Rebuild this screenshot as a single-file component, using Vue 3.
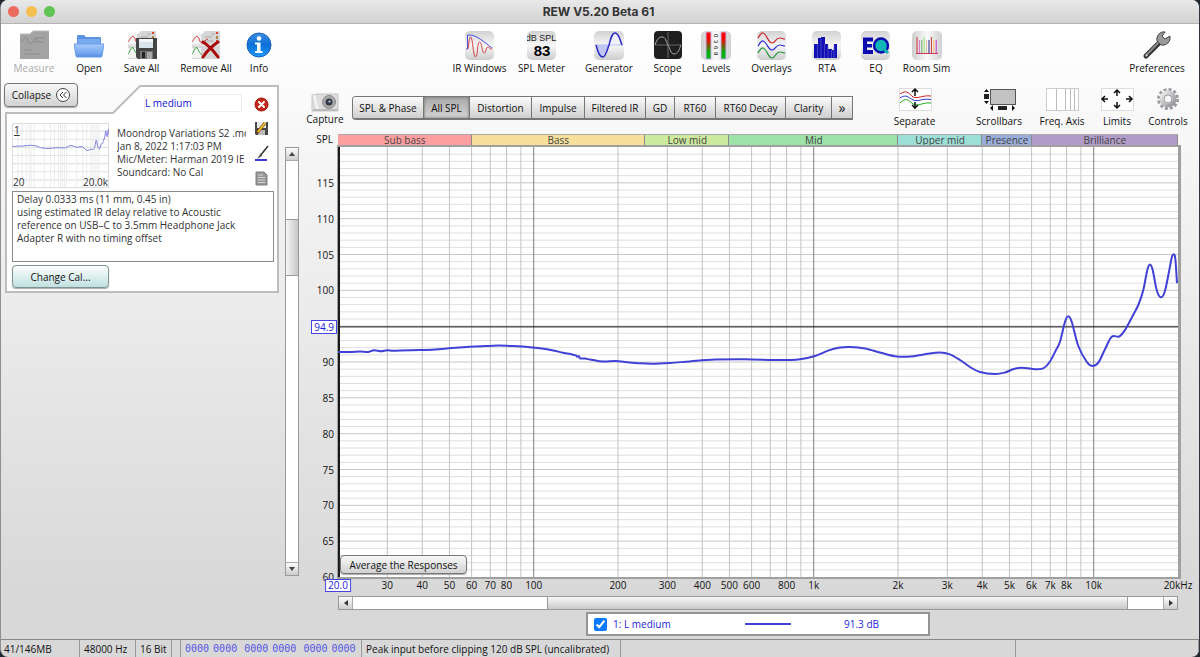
<script setup>
import { ref } from 'vue'

const F_MIN = 20
const F_MAX = 20000
const DB_MIN = 60
const DB_MAX = 120
const W = 840
const H = 430

const fx = (f) => Math.log(f / F_MIN) / Math.log(F_MAX / F_MIN)
const dy = (d) => (DB_MAX - d) / (DB_MAX - DB_MIN)

const vLines = []
for (let decade = 10; decade <= 10000; decade *= 10) {
  for (let n = 1; n < 10; n++) {
    const f = n * decade
    if (f > F_MIN && f < F_MAX) vLines.push({ x: fx(f) * W, major: n === 1 })
  }
}
const hLines = []
for (let d = DB_MIN + 1; d < DB_MAX; d++) hLines.push({ y: dy(d) * H, major: d % 5 === 0 })

const dbLabels = [115, 110, 105, 100, 90, 85, 80, 75, 70, 65, 60]
const cursorDb = 94.9
const freqLabels = [
  [30, '30'], [40, '40'], [50, '50'], [60, '60'], [70, '70'], [80, '80'], [100, '100'],
  [200, '200'], [300, '300'], [400, '400'], [500, '500'], [600, '600'], [800, '800'],
  [1000, '1k'], [2000, '2k'], [3000, '3k'], [4000, '4k'], [5000, '5k'], [6000, '6k'],
  [7000, '7k'], [8000, '8k'], [10000, '10k'], [20000, '20kHz'],
]

const bands = [
  { name: 'Sub bass', from: 20, to: 60, color: '#fe9f9f' },
  { name: 'Bass', from: 60, to: 250, color: '#f7e09c' },
  { name: 'Low mid', from: 250, to: 500, color: '#cdea9c' },
  { name: 'Mid', from: 500, to: 2000, color: '#9de3a9' },
  { name: 'Upper mid', from: 2000, to: 4000, color: '#9cdfd6' },
  { name: 'Presence', from: 4000, to: 6000, color: '#9aaedb' },
  { name: 'Brilliance', from: 6000, to: 20000, color: '#b19cc9' },
]

// Response trace in plot units (840 x 430)
const trace = [
  [0, 205], [12, 205], [22, 204.6], [30, 205], [36, 203.3], [43, 204.3], [49, 203.3], [55, 203.8],
  [62, 203.4], [82, 203], [97, 202.4], [114, 201], [132, 199.8], [147, 199.1], [160, 198.6], [172, 199],
  [187, 199.7], [202, 201.2], [214, 203.2], [225, 205.7], [234, 207.4], [236, 208], [238, 208.4],
  [239, 209.8], [241, 209.2], [242, 211.4], [247, 211.6], [252, 212.6], [259, 213.8], [267, 214.5],
  [278, 214], [287, 215.1], [300, 216.2], [314, 216.8], [332, 216], [352, 214.4], [377, 212.6],
  [407, 212.2], [442, 213.1], [462, 212.2], [477, 209], [490, 203.6], [502, 200.6], [512, 200],
  [527, 201.5], [542, 205.5], [557, 209.3], [572, 209.6], [587, 207.2], [602, 205.6], [612, 207.4],
  [622, 213], [632, 220], [642, 225], [657, 227], [667, 225.5], [675, 222.3], [683, 220.7],
  [692, 221.5], [699, 222.3], [706, 221], [712, 214.5], [718, 203], [722, 194.7], [727, 174.7],
  [730.3, 169.2], [733.7, 174.7], [740.3, 199], [748.7, 214.7], [754.3, 219], [760.3, 215.7],
  [767, 202.3], [773.7, 189.8], [781.3, 189.5], [787, 183], [793.7, 170.7], [800.3, 158],
  [805.3, 143], [809.3, 123], [812, 117.5], [814.7, 123], [818.7, 143], [822.7, 150.3],
  [826.7, 144.7], [830.7, 126.3], [833.7, 110.7], [835.7, 107.3], [837.3, 111.3], [839, 136.3],
]
const tracePath = trace.reduce((d, p, i, a) => {
  if (i === 0) return `M${p[0]},${p[1]}`
  const p0 = a[i - 2] || a[i - 1]
  const p1 = a[i - 1]
  const p3 = a[i + 1] || p
  const c1 = [p1[0] + (p[0] - p0[0]) / 6, p1[1] + (p[1] - p0[1]) / 6]
  const c2 = [p[0] - (p3[0] - p1[0]) / 6, p[1] - (p3[1] - p1[1]) / 6]
  return `${d}C${c1.map((v) => v.toFixed(2))} ${c2.map((v) => v.toFixed(2))} ${p[0]},${p[1]}`
}, '')

const tabs = ['SPL & Phase', 'All SPL', 'Distortion', 'Impulse', 'Filtered IR', 'GD', 'RT60', 'RT60 Decay', 'Clarity', '»']
const activeTab = ref('All SPL')
const name = ref('L medium')
const notes = ref('Delay 0.0333 ms (11 mm, 0.45 in)\nusing estimated IR delay relative to Acoustic\nreference on USB–C to 3.5mm Headphone Jack\nAdapter R with no timing offset')
const shown = ref(true)
const roomBars = ['#c33', '#e070c0', '#6a6', '#9d6', '#cba', '#228', '#c33', '#fb6', '#c3c']
</script>

<template>
  <div class="window">
    <svg class="defs" width="0" height="0" aria-hidden="true">
      <defs>
        <linearGradient id="tile" x1="0" y1="0" x2="0" y2="1">
          <stop offset="0" stop-color="#d2d2d2" />
          <stop offset=".5" stop-color="#f6f6f6" />
          <stop offset="1" stop-color="#cdcdcd" />
        </linearGradient>
        <linearGradient id="tileH" x1="0" y1="0" x2="1" y2="0">
          <stop offset="0" stop-color="#cfcfcf" />
          <stop offset=".5" stop-color="#fafafa" />
          <stop offset="1" stop-color="#cfcfcf" />
        </linearGradient>
        <linearGradient id="meter" x1="0" y1="0" x2="0" y2="1">
          <stop offset=".25" stop-color="#f00" />
          <stop offset=".75" stop-color="#00b010" />
        </linearGradient>
        <linearGradient id="folder" x1="0" y1="0" x2="0" y2="1">
          <stop offset="0" stop-color="#a9ccfa" />
          <stop offset=".75" stop-color="#6fa4ee" />
          <stop offset="1" stop-color="#4f88dc" />
        </linearGradient>
        <linearGradient id="blueball" x1="0" y1="0" x2="0" y2="1">
          <stop offset="0" stop-color="#3d8de0" />
          <stop offset=".5" stop-color="#0d70d8" />
          <stop offset="1" stop-color="#1c9cf8" />
        </linearGradient>
        <linearGradient id="metal" x1="0" y1="0" x2="1" y2="1">
          <stop offset="0" stop-color="#eee" />
          <stop offset="1" stop-color="#909096" />
        </linearGradient>
        <g id="cards">
          <path d="M1 4H11L14 1H29V29H1z" fill="#d6d6d6" />
          <path d="M1 15H29" stroke="#f2f2f2" />
          <path d="M1 4H10V14H1z M1 18H10V28H1z" fill="#f3f3f3" />
          <path d="M14 7h7M13 11h9M20 4h4" stroke="#aaa" stroke-width="1" />
          <path d="M26 2v2M26 10v3" stroke="#d43" stroke-width="2" />
          <path d="M26 6v3" stroke="#a84" stroke-width="2" />
          <path d="M1 12C3 10 4 6 6 6.500C9 7 8 13 11 13C14 13 14 9 17 9" fill="none" stroke="#d23a3a" stroke-width="1" />
          <path d="M1 24C3 23 3 18 5 17.500C8 18 8 25 11 24" fill="none" stroke="#3aa64a" stroke-width="1" />
        </g>
      </defs>
    </svg>

    <header class="titlebar">
      <div class="lights"><i class="red"></i><i class="amber"></i><i class="green"></i></div>
      <h1>REW V5.20 Beta 61</h1>
    </header>

    <nav class="toolbar">
      <div class="group files">
        <button class="tool" disabled>
          <svg width="30" height="30"><path d="M1 4H11L14 1H30V29H1z" fill="#a3a3a3" /><path d="M3 12C5 9 7 5 8 8C10 14 11 15 13 13C15 9 16 9 18 10M15 8h11M15 12h10M5 20h8M5 24h16" fill="none" stroke="#8b8b8b" /><path d="M1 4H11L14 1H30" fill="none" stroke="#bbb" /></svg>
          <span>Measure</span>
        </button>
        <button class="tool">
          <svg width="30" height="30"><path d="M3 6q0-1 1-1h6l2 2h14q1 0 1 1v7H3z" fill="#5b93e2" /><path d="M4 9h22v5H4z" fill="#78aaf0" /><path d="M0 14h30l-2 12q0 1-1 1H3q-1 0-1-1z" fill="url(#folder)" stroke="#6b9ee6" stroke-width="1" /></svg>
          <span>Open</span>
        </button>
        <button class="tool">
          <svg width="30" height="30"><use href="#cards" /><path d="M9 8h21v21H11l-2-2z" fill="#454545" /><path d="M12 9h14v9H12z" fill="#d8e4ec" /><path d="M12 9h14v3H12z" fill="#f3f7fa" /><path d="M13 21h13v8H13z" fill="#777" /><path d="M15 22h3v6h-3z" fill="#222" /><path d="M20 22h5v7h-5z" fill="#aaa" /></svg>
          <span>Save All</span>
        </button>
        <button class="tool">
          <svg width="30" height="30"><use href="#cards" /><path d="M12 12C17 15 22 20 27 27M27 12C21 16 16 21 12 27" stroke="#a80a0a" stroke-width="3" stroke-linecap="round" fill="none" /></svg>
          <span>Remove All</span>
        </button>
        <button class="tool">
          <svg width="30" height="30"><circle cx="15" cy="15" r="12" fill="url(#blueball)" stroke="#1c62b4" /><circle cx="15" cy="8.500" r="2.300" fill="#fff" /><path d="M11 12.500h5.500v8.500h2v2h-7.500v-2h2v-6.500h-2z" fill="#fff" /></svg>
          <span>Info</span>
        </button>
      </div>
      <div class="group views">
        <button class="tool">
          <svg width="30" height="30"><rect x="0" y="1" width="29" height="29" rx="5" fill="url(#tile)" /><path d="M1 19H2.500V5C11 4 19 12 27 18" fill="none" stroke="#4d4ddc" /><path d="M3 19C4 14 4 7 5.500 7C8 7 8 27 10.500 27C13 27 12 12 14.500 12C17 12 17 23 19 23C21 23 21 17 23 17C24 17 24 19 27 19" fill="none" stroke="#d94444" /></svg>
          <span>IR Windows</span>
        </button>
        <button class="tool">
          <svg width="30" height="30"><rect x="0" y="1" width="29" height="29" rx="5" fill="url(#tile)" /><text x="14" y="11" text-anchor="middle" class="svg-small">dB SPL</text><text x="15" y="26" text-anchor="middle" class="svg-big">83</text></svg>
          <span>SPL Meter</span>
        </button>
        <button class="tool">
          <svg width="30" height="30"><rect x="0" y="1" width="30" height="29" rx="5" fill="url(#tile)" /><path d="M2 15C4 23 6 27 8.500 27C12 27 13 20 15 15z" fill="#c0c6f4" /><path d="M15 15C17 8 18 3 21 3C25 3 26 10 28 15z" fill="#f0f0fc" /><path d="M1 15H29" stroke="#b6bdf0" /><path d="M2 15C4 23 6 27 8.500 27C12 27 13 20 15 15C17 8 18 3 21 3C25 3 26 10 28 15" fill="none" stroke="#2727c4" stroke-width="1.500" /></svg>
          <span>Generator</span>
        </button>
        <button class="tool">
          <svg width="30" height="30"><rect x="1" y="1" width="28" height="28" rx="4" fill="#1f1f1f" /><path d="M2 15H28M15 2V28" stroke="#666" /><path d="M2 15C4 9 6 7 9 7C13 7 13 12 15 15C17 19 18 24 21 24C25 24 26 20 28 15" fill="none" stroke="#a8a8a8" /></svg>
          <span>Scope</span>
        </button>
        <button class="tool">
          <svg width="30" height="30"><rect x="0" y="1" width="30" height="29" rx="5" fill="url(#tileH)" /><path d="M5 2h5v27H5zM20 2h5v27h-5z" fill="url(#meter)" stroke="#c9b6e8" stroke-width="1" /><g class="svg-tiny"><text transform="translate(13 4) rotate(90)">0</text><text transform="translate(13 10) rotate(90)">3</text><text transform="translate(13 16) rotate(90)">6</text><text transform="translate(13 22) rotate(90)">9</text></g></svg>
          <span>Levels</span>
        </button>
        <button class="tool">
          <svg width="30" height="30"><rect x="0" y="1" width="29" height="29" rx="5" fill="url(#tile)" /><g fill="none" stroke-width="1.200"><path d="M1 8C3 5 4 2.500 6 3C10 4 11 13 15 13C19 13 18 8 23 8C25 8 26 9 28 9" stroke="#cc2b2b" /><path d="M1 16C3 13 4 10.500 6 11C10 12 11 20 15 20C19 20 18 15 23 15C25 15 26 16 28 16" stroke="#2e2ed4" /><path d="M1 23C3 20 4 17.500 6 18C10 19 11 28 15 28C19 28 18 22 23 22C25 22 26 23 28 23" stroke="#23973a" /></g></svg>
          <span>Overlays</span>
        </button>
        <button class="tool">
          <svg width="30" height="30"><rect x="0" y="1" width="29" height="29" rx="5" fill="url(#tile)" /><path d="M2 28V14h4V8h3V7h4v7h3v5h4v1h2v-6h3v14z" fill="#1010b4" /><path d="M5.500 14v14M9 9v19M12.500 14v14M16 15v13M19.500 20v8M22 15v13" stroke="#6a6ad0" stroke-width=".6" /></svg>
          <span>RTA</span>
        </button>
        <button class="tool">
          <svg width="30" height="30"><rect x="0" y="1" width="29" height="29" rx="5" fill="url(#tile)" /><path d="M2 7.500h10v4H6v2.500H11v3.500H6V20H12v4H2z" fill="#0b0bae" /><circle cx="20" cy="15.500" r="7" fill="#10b5b5" stroke="#0b0bae" stroke-width="2.500" /><path d="M21 17l6 6" stroke="#10b5b5" stroke-width="3" /></svg>
          <span>EQ</span>
        </button>
        <button class="tool">
          <svg width="30" height="30"><rect x="0" y="1" width="30" height="29" rx="5" fill="url(#tileH)" /><path v-for="(c, i) in roomBars" :key="i" :d="`M${5 + i * 2.4} ${i % 3 ? 10 : 7}V23`" :stroke="c" /><path d="M4 23.500H26" stroke="#c36" /></svg>
          <span>Room Sim</span>
        </button>
      </div>
      <div class="group prefs">
        <button class="tool">
          <svg width="30" height="30"><path d="M4 26L18 12" stroke="#333" stroke-width="5" stroke-linecap="round" /><path d="M4.500 25L17 12" stroke="#888" stroke-width="2" stroke-linecap="round" /><path d="M15 11C14 6 18 1 23 2L20 6L23 9L28 6C29 12 24 16 19 15z" fill="#999" stroke="#444" /><circle cx="4.500" cy="25.500" r="1" fill="#eee" /></svg>
          <span>Preferences</span>
        </button>
      </div>
    </nav>

    <div class="body">
      <aside class="side">
        <div class="measures">
          <button class="btn collapse">Collapse
            <svg width="14" height="14"><circle cx="7" cy="7" r="6.500" fill="#fff" stroke="#444" /><path d="M7 4L4 7L7 10M10.500 4L7.500 7L10.500 10" fill="none" stroke="#333" /></svg>
          </button>
          <section class="card">
            <svg class="outline" viewBox="0 0 274 208" preserveAspectRatio="none"><path d="M1 28H108L135 1H273V207H1z" fill="#fff" stroke="#bdbdbd" stroke-width="2" vector-effect="non-scaling-stroke" /></svg>
            <div class="card-top">
              <div class="card-info">
                <input v-model="name" class="name" aria-label="Measurement name" />
                <div class="summary">
                  <div class="thumb">
                    <svg viewBox="0 0 96 64" preserveAspectRatio="none">
                      <path d="M0 8H96M0 16H96M0 24H96M0 32H96M0 40H96M0 48H96M0 56H96" stroke="#e2e2e2" />
                      <path d="M6 0V64M10 0V64M14 0V64M17 0V64M19 0V64M22 0V64M32 0V64M38 0V64M42 0V64M46 0V64M48 0V64M50 0V64M52 0V64M54 0V64M64 0V64M70 0V64M74 0V64M78 0V64M80 0V64M82 0V64M84 0V64M86 0V64" stroke="#ececec" />
                      <rect x=".5" y=".5" width="95" height="63" fill="none" stroke="#ddd" />
                    </svg>
                    <svg viewBox="0 74 840 363" preserveAspectRatio="none"><path :d="tracePath" fill="none" stroke="#7d7de0" vector-effect="non-scaling-stroke" /></svg>
                    <b>1</b><span class="lo">20</span><span class="hi">20.0k</span>
                  </div>
                  <p class="meta">Moondrop Variations S2 .mdat<br />Jan 8, 2022 1:17:03 PM<br />Mic/Meter: Harman 2019 IE<br />Soundcard: No Cal</p>
                </div>
              </div>
              <div class="card-icons">
                <button aria-label="Remove"><svg width="15" height="15"><circle cx="7.500" cy="7.500" r="6.500" fill="#c8281c" stroke="#9a1a10" /><path d="M5 5L10 10M10 5L5 10" stroke="#fff" stroke-width="2" stroke-linecap="round" /></svg></button>
                <button aria-label="Save"><svg width="15" height="15"><path d="M1 1h13v13H2l-1-1z" fill="#484848" /><path d="M3 1h9v6H3z" fill="#e4e8ea" /><path d="M4 9h7v5H4z" fill="#bbb" /><path d="M3 12L11 2" stroke="#7a4a10" stroke-width="3" /><path d="M4 11L11 2" stroke="#f0c030" stroke-width="2" /></svg></button>
                <button aria-label="Trace colour"><svg width="15" height="17"><path d="M14 1L6 11" stroke="#333" stroke-width="1.500" /><path d="M7 8L3 14L8 11z" fill="#555" /><path d="M1 15H13" stroke="#3b3bd0" stroke-width="2" /></svg></button>
                <button aria-label="Notes"><svg width="15" height="15"><path d="M2 1h8l3 3v10H2z" fill="#969696" stroke="#808080" /><path d="M4 4h5M4 6.500h7M4 9h7M4 11.500h7" stroke="#d2d2d2" /></svg></button>
              </div>
            </div>
            <textarea v-model="notes" class="notes" aria-label="Notes"></textarea>
            <button class="btn cal">Change Cal...</button>
          </section>
        </div>
        <div class="vscroll">
          <button aria-label="Scroll up"><svg width="6" height="4"><path d="M0 4L3 0L6 4z" fill="#444" /></svg></button>
          <i class="gap-a"></i><i class="handle"></i><i class="gap-b"></i>
          <button aria-label="Scroll down"><svg width="6" height="4"><path d="M0 0L3 4L6 0z" fill="#444" /></svg></button>
        </div>
      </aside>

      <main class="main">
        <div class="viewbar">
          <button class="tool capture">
            <svg width="28" height="20"><path d="M1 3l5-1h21v17H1z" fill="#dedede" stroke="#c4c4c4" /><path d="M3 3l4 16" stroke="#f8f8f8" stroke-width="2" /><circle cx="18" cy="10" r="6.500" fill="#aaa" stroke="#888" /><circle cx="18" cy="10" r="3.500" fill="#333a48" /><circle cx="18.500" cy="9.500" r="1" fill="#cde" /><path d="M2 18H27" stroke="#bbb" stroke-width="2" /></svg>
            <span>Capture</span>
          </button>
          <div class="tabs">
            <button v-for="t in tabs" :key="t" :class="{ active: t === activeTab }" @click="activeTab = t">{{ t }}</button>
          </div>
          <div class="axis-tools">
            <button class="tool">
              <svg width="34" height="24"><rect x="1.500" y="1.500" width="32" height="22" fill="#fff" stroke="#ddd" /><g fill="none"><path d="M2 7C8 3 10 5 15 10C21 12 24 8 33 9" stroke="#c22" /><path d="M2 11C8 7 10 10 15 13C21 15 24 11 33 12.500" stroke="#33c" /><path d="M2 16C8 10 10 13 15 17C21 20 24 15 33 16" stroke="#2a2" /><path d="M17 2V9M14 5L17 2L20 5M17 15V22M14 18L17 21L20 18" stroke="#111" stroke-width="1.500" /></g></svg>
              <span>Separate</span>
            </button>
            <button class="tool">
              <svg width="34" height="24"><rect x="8.500" y="2.500" width="25" height="15" fill="#c2c2c2" stroke="#555" /><path d="M2 7h5v5H2zM16 19h9v4h-9z" fill="#222" /><path d="M4.500 2L7 5H2zM4.500 17L2 14h5zM8 21l3-3v6zM33 21l-3-3v6z" fill="#111" /></svg>
              <span>Scrollbars</span>
            </button>
            <button class="tool">
              <svg width="34" height="24"><rect x="1.500" y="1.500" width="32" height="22" fill="#fff" stroke="#ccc" /><path d="M11.500 2V23M20.500 2V23M25.500 2V23M29.500 2V23" stroke="#bbb" /></svg>
              <span>Freq. Axis</span>
            </button>
            <button class="tool">
              <svg width="34" height="24"><rect x="1.500" y="1.500" width="32" height="22" fill="#fff" stroke="#ddd" /><path d="M17 9V3M14 6L17 3L20 6M17 15V21M14 18L17 21L20 18M8 12H2M5 9L2 12L5 15M26 12H32M29 9L32 12L29 15" fill="none" stroke="#111" stroke-width="1.500" /></svg>
              <span>Limits</span>
            </button>
            <button class="tool">
              <svg width="24" height="24"><circle cx="12" cy="12" r="9.500" fill="none" stroke="#9a9aa0" stroke-width="3" stroke-dasharray="3 2" /><circle cx="12" cy="12" r="6.500" fill="none" stroke="url(#metal)" stroke-width="4" /><circle cx="12" cy="12" r="4" fill="#f8f8f8" stroke="#98989e" /></svg>
              <span>Controls</span>
            </button>
          </div>
        </div>

        <div class="chart">
          <div class="corner">SPL</div>
          <div class="bands">
            <div v-for="b in bands" :key="b.name" :style="{ flexGrow: (fx(b.to) - fx(b.from)) * 100, background: b.color }">{{ b.name }}</div>
          </div>
          <div class="y-axis">
            <span v-for="d in dbLabels" :key="d" :style="{ top: dy(d) * 100 + '%' }">{{ d }}</span>
            <span class="boxed" :style="{ top: dy(cursorDb) * 100 + '%' }">{{ cursorDb }}</span>
          </div>
          <div class="plot">
            <svg class="graph" :viewBox="`0 0 ${W} ${H}`" preserveAspectRatio="none">
              <path v-for="(l, i) in hLines" :key="'h' + i" :d="`M0 ${l.y}H${W}`" :class="l.major ? 'h-major' : 'h-minor'" />
              <path v-for="(l, i) in vLines" :key="'v' + i" :d="`M${l.x} 0V${H}`" :class="l.major ? 'v-major' : 'v-minor'" />
              <path :d="`M0 ${dy(cursorDb) * H}H${W}`" class="cursor" />
              <path :d="`M1 0V${H}`" class="edge" />
              <path :d="tracePath" class="trace" />
            </svg>
            <button class="btn average">Average the Responses</button>
          </div>
          <div class="x-axis">
            <span class="boxed">20.0</span>
            <span v-for="[f, t] in freqLabels" :key="f" :style="{ left: fx(f) * 100 + '%' }">{{ t }}</span>
          </div>
          <div class="hscroll">
            <button aria-label="Scroll left"><svg width="4" height="6"><path d="M4 0L0 3L4 6z" fill="#333" /></svg></button>
            <i class="gap-a"></i><i class="handle"></i><i class="gap-b"></i>
            <button aria-label="Scroll right"><svg width="4" height="6"><path d="M0 0L4 3L0 6z" fill="#333" /></svg></button>
          </div>
          <div class="legend">
            <label><input v-model="shown" type="checkbox" /> 1: L medium</label>
            <i class="swatch"></i>
            <span class="level">91.3 dB</span>
          </div>
        </div>
      </main>
    </div>

    <footer class="status">
      <span>41/146MB</span>
      <span>48000 Hz</span>
      <span>16 Bit</span>
      <span></span>
      <span class="bits"><em v-for="n in 3" :key="n"><i>0000</i><i>0000</i></em></span>
      <span>Peak input before clipping 120 dB SPL (uncalibrated)</span>
      <span></span>
      <span></span>
    </footer>
  </div>
</template>

<style>
body {
  background: #20262e;
}
</style>

<style scoped>
.window {
  min-height: 100vh;
  box-sizing: border-box;
  display: flex;
  flex-direction: column;
  position: relative;
  border-left: 1px solid #8d8f92;
  border-right: 1px solid #30343e;
  border-radius: 8px;
  overflow: hidden;
  background: linear-gradient(#fff 24px, #fbfbfb 80px, #d8d8d8 90%);
  color: #111;
  font: 500 10px/14px "Open Sans", "Noto Sans", sans-serif;
}
.defs { position: absolute; }
button, input, textarea { font: inherit; color: inherit; margin: 0; padding: 0; border: 0; background: none; box-sizing: border-box; }
svg { display: block; flex: none; }

.titlebar {
  height: 24px;
  box-sizing: border-box;
  display: flex;
  align-items: center;
  background: linear-gradient(#e9e9e9, #d2d2d2);
  border-bottom: 1px solid #b4b4b4;
}
.lights { display: flex; gap: 7px; padding-left: 7px; width: 60px; }
.lights i { width: 11px; height: 11px; border-radius: 50%; }
.red { background: #ed6a5e; }
.amber { background: #f5bf4f; }
.green { background: #61c554; }
.titlebar h1 { flex: 1; margin: 0 70px 0 0; text-align: center; font: 700 12px/22px Inter, sans-serif; color: #333; }

.toolbar { display: flex; justify-content: space-between; padding: 6px 16px 4px 6px; }
.group { display: grid; }
.files { grid-template-columns: 54px 56px 49px 80px 26px; }
.views { grid-template-columns: 61px 63px 72px 45px 52px 59px 52px 46px 55px; }
.prefs { grid-template-columns: 52px; }
.tool { display: flex; flex-direction: column; align-items: center; gap: 1px; white-space: nowrap; min-width: 0; }
.tool:disabled { color: #aaa; }
.svg-small { font: 9px "Liberation Sans", sans-serif; fill: #222; }
.svg-big { font: 700 15px "Liberation Sans", sans-serif; }
.svg-tiny { font: 6px "Liberation Sans", sans-serif; }

.body { flex: 1; display: flex; }
.side { width: 298px; margin-right: 1px; flex: none; display: flex; justify-content: space-between; padding-bottom: 63px; box-sizing: border-box; }
.measures { position: relative; width: 278px; padding: 6px 0 0 4px; box-sizing: border-box; }
.btn {
  border: 1px solid #777;
  border-radius: 4px;
  background: linear-gradient(#f8f8f8, #d2d2d2);
  box-shadow: 0 1px 1px #aaa;
  white-space: nowrap;
}
.collapse { position: absolute; left: 3px; top: 4px; width: 74px; height: 24px; display: flex; align-items: center; justify-content: center; gap: 5px; z-index: 1; }
.card { position: relative; height: 208px; box-sizing: border-box; padding: 9px 5px 0 7px; }
.outline { position: absolute; inset: 0; width: 100%; height: 100%; z-index: 0; }
.card-top { position: relative; display: flex; height: 97px; justify-content: space-between; }
.card-info { width: 234px; }
.name { display: block; width: 98px; height: 18px; margin: 0 0 11px 132px; border: 1px solid #eee; color: #1414d2; }
.summary { display: flex; gap: 8px; }
.thumb { position: relative; width: 97px; height: 65px; flex: none; color: #333; }
.thumb svg { position: absolute; inset: 0; width: 100%; height: 100%; }
.thumb b, .thumb span { position: absolute; line-height: 12px; }
.thumb b { left: 2px; top: 1px; font-weight: 500; text-decoration: underline; }
.lo { left: 1px; bottom: 0; }
.hi { right: 1px; bottom: 0; }
.meta { margin: 4px 0 0; line-height: 13px; white-space: nowrap; overflow: hidden; color: #333; }
.card-icons { width: 26px; display: flex; flex-direction: column; align-items: center; }
.card-icons button { height: 25px; display: flex; align-items: center; }
.card-icons button:first-child { height: 20px; margin-bottom: 2px; }
.notes { position: relative; display: block; width: 262px; height: 71px; margin-bottom: 3px; padding: 1px 4px; border: 1px solid #8b8b8b; background: #fff; line-height: 13px; color: #333; resize: none; overflow: hidden; }
.cal { position: relative; width: 97px; height: 23px; background: linear-gradient(#fdfffe, #c0e0e0); border-color: #7e9494; }

.vscroll, .hscroll { display: flex; background: #fff; border: 1px solid #999; box-sizing: border-box; }
.vscroll { flex-direction: column; width: 14px; margin-top: 68px; }
.vscroll button, .hscroll button { flex: none; width: 12px; height: 13px; display: flex; align-items: center; justify-content: center; background: linear-gradient(#fdfdfd, #ccc); }
.vscroll button:first-child { border-bottom: 1px solid #aaa; }
.vscroll button:last-child { border-top: 1px solid #aaa; }
.vscroll .gap-a { flex: 58; }
.vscroll .gap-b { flex: 287; }
.vscroll .handle { flex: 56; border: solid #999; border-width: 1px 0; background: linear-gradient(90deg, #f6f6f6, #c6c6c6); }
.hscroll { height: 14px; }
.hscroll button { height: 12px; width: 14px; }
.hscroll button:first-child { border-right: 1px solid #aaa; }
.hscroll button:last-child { border-left: 1px solid #aaa; }
.hscroll .gap-a { flex: 195; }
.hscroll .gap-b { flex: 35; }
.hscroll .handle { flex: 581; border: solid #999; border-width: 0 1px; background: linear-gradient(#f8f8f8, #c8c8c8); }

.main { flex: 1; min-width: 0; display: flex; flex-direction: column; }
.viewbar { display: flex; height: 55px; box-sizing: border-box; padding: 8px 6px 0 5px; }
.capture { width: 40px; align-self: flex-start; padding-top: 5px; gap: 0; }
.tabs { display: grid; grid-template-columns: 71px 46px 62px 53px 61px 29px 41px 70px 46px 21px; height: 24px; margin: 9px 0 0 7px; box-sizing: border-box; border: solid #777; border-width: 1px 0 2px 1px; border-radius: 4px 0 0 4px; }
.tabs button { border-right: 1px solid #777; background: linear-gradient(#fafafa, #cfcfcf); white-space: nowrap; }
.tabs button.active { background: linear-gradient(#a8a8a8, #d4d4d4); box-shadow: inset 0 0 3px #666; }
.tabs button:first-child { border-radius: 3px 0 0 3px; }
.tabs button:last-child { font-size: 14px; }
.axis-tools { display: grid; grid-template-columns: 101px 68px 58px 52px 50px; margin-left: auto; align-items: start; }
.axis-tools .tool { gap: 3px; }

.chart { flex: 1; display: grid; grid-template-columns: 38px 1fr 21px; grid-template-rows: 13px 1fr 19px 14px 29px; }
.chart > * { grid-column: 2; }
.chart > .corner { grid-column: 1; text-align: right; padding-right: 5px; line-height: 10px; }
.bands { display: flex; height: 11px; border-top: 1px solid #aaa; box-sizing: border-box; }
.bands div { flex-basis: 0; min-width: 0; text-align: center; line-height: 10px; color: #444; box-shadow: inset -1px 0 0 #8a8a8a; }
.chart > .y-axis { grid-column: 1; position: relative; }
.y-axis span { position: absolute; right: 4px; transform: translateY(-50%); line-height: 12px; }
.y-axis .boxed { right: 1px; }
.boxed { border: 1px solid #4444e4; background: #fff; color: #1a1ae0; padding: 0 2px; line-height: 10px; }
.plot { position: relative; background: #fff; box-shadow: 1px 0 0 2px #a0a0a0; }
.graph { position: absolute; inset: 0; width: 100%; height: 100%; }
.graph path { fill: none; stroke-width: 1; vector-effect: non-scaling-stroke; }
.graph .h-minor { stroke: #dedede; }
.graph .h-major { stroke: #c6c6c6; }
.graph .v-minor { stroke: #c4c4c4; }
.graph .v-major { stroke: #7c7c7c; }
.graph .cursor { stroke: #111; }
.graph .edge { stroke: #1a1a1a; stroke-width: 2; }
.graph .trace { stroke: #4141d6; stroke-width: 2; }
.average { position: absolute; left: 2px; bottom: 3px; width: 127px; height: 19px; }
.x-axis { position: relative; }
.x-axis span { position: absolute; top: 2px; transform: translateX(-50%); line-height: 12px; white-space: nowrap; }
.x-axis .boxed { left: 0; line-height: 11px; }
.legend { position: relative; justify-self: center; width: 344px; height: 24px; margin-top: 2px; box-sizing: border-box; display: flex; align-items: center; padding: 0 49px 0 6px; background: #fff; border: 2px solid #949494; color: #2626d8; }
.legend label { display: flex; align-items: center; gap: 6px; width: 151px; }
.legend input { width: 13px; height: 13px; accent-color: #0a7aff; }
.swatch { width: 46px; height: 2px; background: #4141d6; }
.level { margin-left: auto; }

.status { display: grid; grid-template-columns: 79px 56px 36px 9px 181px 259px 395px 1fr; height: 18px; box-sizing: border-box; border-top: 1px solid #888; white-space: nowrap; }
.status > span { border-right: 1px solid #999; padding-left: 4px; line-height: 18px; }
.status > span:first-child { padding-left: 3px; }
.status > .bits { display: flex; gap: 7px; color: #5555e8; font-family: "DejaVu Sans Mono", monospace; }
.bits em { display: flex; gap: 4px; }
.bits em, .bits i { font-style: normal; }
</style>
